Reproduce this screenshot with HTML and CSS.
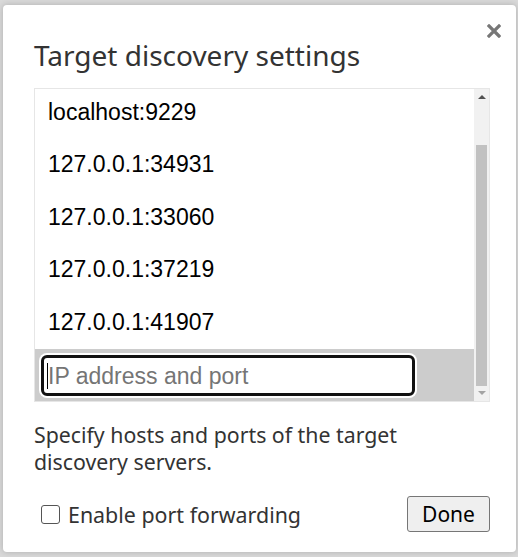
FILE: index.html
```html
<!DOCTYPE html>
<html>
<head>
<meta charset="utf-8">
<link rel="stylesheet" href="styles.css">
</head>
<body>
<div class="backdrop">
  <div class="dialog">
    <div class="close"><svg width="14" height="14" viewBox="0 0 14 14"><path d="M2 2L12 12M12 2L2 12" stroke="#777" stroke-width="3.2" stroke-linecap="square"/></svg></div>
    <h1 class="title">Target discovery settings</h1>
    <div class="listbox">
      <div class="items">
        <div class="item">localhost:9229</div>
        <div class="item">127.0.0.1:34931</div>
        <div class="item">127.0.0.1:33060</div>
        <div class="item">127.0.0.1:37219</div>
        <div class="item">127.0.0.1:41907</div>
        <div class="item editing">
          <div class="input"><span class="caret"></span><span class="placeholder">IP address and port</span></div>
        </div>
      </div>
      <div class="scrollbar">
        <div class="arrow up"></div>
        <div class="track"><div class="thumb"></div></div>
        <div class="arrow down"></div>
      </div>
    </div>
    <p class="desc">Specify hosts and ports of the target discovery servers.</p>
    <div class="footer">
      <label class="check"><span class="box"></span><span>Enable port forwarding</span></label>
      <button class="done">Done</button>
    </div>
  </div>
</div>
</body>
</html>
```

FILE: styles.css
```css
html, body {
  margin: 0;
  padding: 0;
}
body {
  width: 518px;
  height: 557px;
  overflow: hidden;
  background: #d9d9d9;
}
.backdrop {
  padding: 5px 2px 5px 3px;
  height: 557px;
  box-sizing: border-box;
}
.dialog {
  position: relative;
  background: #fff;
  border-radius: 4px;
  height: 547px;
  box-sizing: border-box;
  padding: 0 26px 0 31px;
  box-shadow: 0 0 6px rgba(0,0,0,0.2);
  font-family: "Noto Sans", "Open Sans", sans-serif;
  color: #333;
}
.close {
  position: absolute;
  right: 15px;
  top: 19px;
  width: 14px;
  height: 14px;
}
.close svg {
  display: block;
}
.title {
  margin: 0;
  padding-top: 30px;
  font-weight: normal;
  font-size: 28px;
  line-height: 40px;
  height: 53px;
  color: #333;
}
.listbox {
  display: flex;
  border: 1px solid #e6e6e6;
  height: 314px;
  box-sizing: border-box;
  overflow: hidden;
}
.items {
  flex: 1;
  display: flex;
  flex-direction: column;
  margin-top: -2.5px;
  font-family: "Liberation Sans", Arial, sans-serif;
  font-size: 23px;
  color: #000;
}
.item {
  height: 52.5px;
  line-height: 50px;
  padding-left: 13px;
  box-sizing: border-box;
  flex: none;
}
.editing {
  background: #cccccc;
  padding: 6px 59px 5px 6px;
  height: auto;
  flex: 1;
}
.input {
  height: 41px;
  box-sizing: border-box;
  border: 3px solid #111;
  border-radius: 6px;
  background: #fff;
  box-shadow: 0 0 0 2px #fff;
  display: flex;
  align-items: center;
  padding-left: 3px;
}
.caret {
  width: 1px;
  height: 26px;
  background: #000;
}
.placeholder {
  color: #757575;
  line-height: 26px;
}
.scrollbar {
  width: 15px;
  background: #f1f1f1;
  display: flex;
  flex-direction: column;
  align-items: center;
}
.arrow {
  width: 0;
  height: 0;
  border-left: 4px solid transparent;
  border-right: 4px solid transparent;
}
.arrow.up {
  margin-top: 6px;
  border-bottom: 4px solid #505050;
  margin-bottom: 5px;
}
.arrow.down {
  margin-top: 5px;
  margin-bottom: 6px;
  border-top: 4px solid #a3a3a3;
}
.track {
  flex: 1;
  width: 100%;
  display: flex;
  flex-direction: column;
  justify-content: flex-end;
  align-items: center;
}
.thumb {
  width: 11px;
  height: 241px;
  background: #c1c1c1;
}
.desc {
  margin: 19px 0 0 0;
  font-size: 21.3px;
  line-height: 27px;
  color: #333;
}
.footer {
  display: flex;
  justify-content: space-between;
  align-items: center;
  margin-top: 21px;
}
.check {
  display: flex;
  align-items: center;
  font-size: 21.4px;
  color: #333;
  padding-left: 7px;
}
.box {
  width: 19px;
  height: 19px;
  border: 1.5px solid #555;
  border-radius: 3px;
  margin-right: 8px;
  box-sizing: border-box;
}
.done {
  font-family: "Noto Sans", "Open Sans", sans-serif;
  font-size: 21px;
  color: #000;
  background: #efefef;
  border: 1px solid #767676;
  border-radius: 3px;
  width: 83px;
  height: 36px;
  padding: 0;
}
```
